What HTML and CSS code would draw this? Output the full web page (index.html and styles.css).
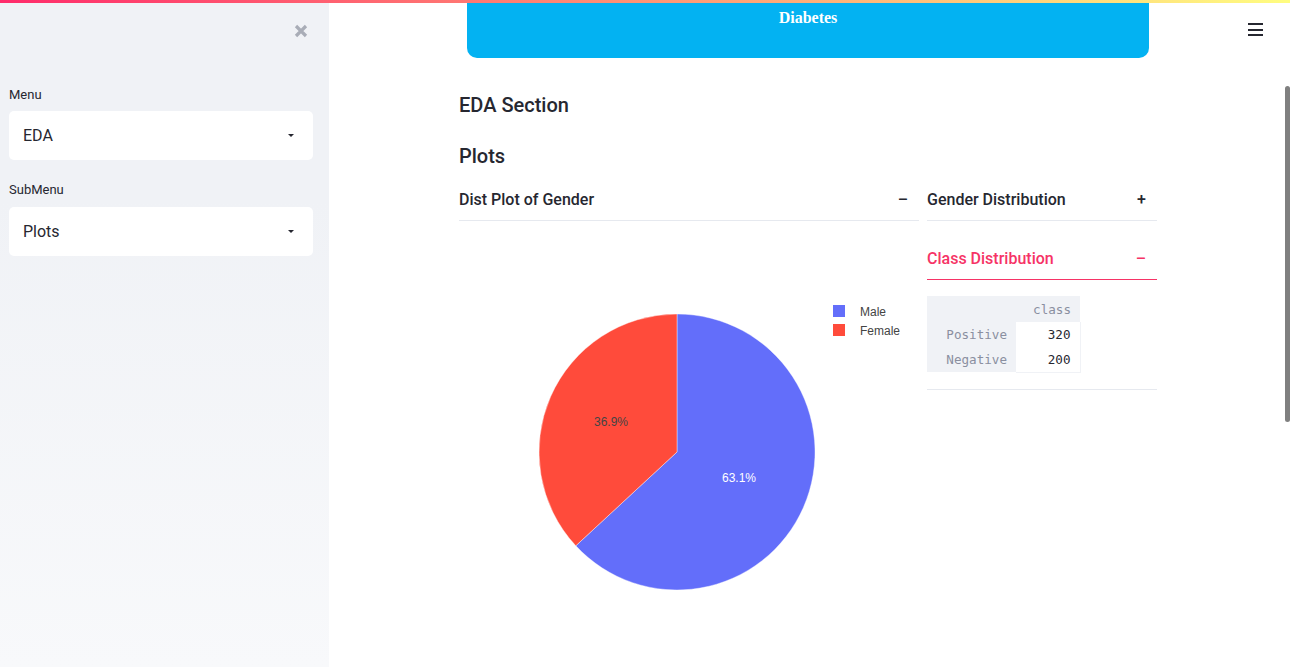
FILE: index.html
```html
<!DOCTYPE html>
<html>
<head>
<meta charset="utf-8">
<link rel="stylesheet" href="styles.css">
</head>
<body>
<div class="decoration"></div>
<aside class="sidebar">
  <div class="close-row">
    <svg class="close" width="14" height="14" viewBox="0 0 14 14"><path d="M2 2L12 12M12 2L2 12" stroke="#a9adb7" stroke-width="3.2" stroke-linecap="butt"/></svg>
  </div>
  <div class="label first">Menu</div>
  <div class="select"><span>EDA</span><span class="caret"></span></div>
  <div class="label">SubMenu</div>
  <div class="select"><span>Plots</span><span class="caret"></span></div>
</aside>
<main class="main">
  <div class="hamburger"><span></span><span></span><span></span></div>
  <div class="block">
    <div class="banner">Diabetes</div>
    <h2 class="heading first-h">EDA Section</h2>
    <h2 class="heading second-h">Plots</h2>
    <div class="columns">
      <div class="col">
        <div class="expander">
          <div class="exp-header"><span>Dist Plot of Gender</span><span class="icon">–</span></div>
          <div class="exp-body plot">
            <svg width="460" height="420" viewBox="0 0 460 420" class="pie">
              <path d="M218,215 L218,77 A138,138 0 1 1 116.8,308.8 Z" fill="#636efa" stroke="#ffffff" stroke-width="0.4"/>
              <path d="M218,215 L116.8,308.8 A138,138 0 0 1 218,77 Z" fill="#ff4b3b" stroke="#ffffff" stroke-width="0.4"/>
              <text x="152" y="189" text-anchor="middle" class="pct dark">36.9%</text>
              <text x="280" y="245" text-anchor="middle" class="pct light">63.1%</text>
              <rect x="374" y="68" width="12" height="12" fill="#636efa"/>
              <rect x="374" y="87" width="12" height="12" fill="#ff4b3b"/>
              <text x="401" y="78.5" class="legend">Male</text>
              <text x="401" y="97.5" class="legend">Female</text>
            </svg>
          </div>
        </div>
      </div>
      <div class="col">
        <div class="expander">
          <div class="exp-header"><span>Gender Distribution</span><span class="icon">+</span></div>
        </div>
        <div class="expander open">
          <div class="exp-header active"><span>Class Distribution</span><span class="icon">–</span></div>
          <div class="exp-body table-body">
            <table class="df">
              <thead><tr><th class="idx"></th><th class="colh">class</th></tr></thead>
              <tbody>
                <tr><th class="idx">Positive</th><td>320</td></tr>
                <tr><th class="idx">Negative</th><td>200</td></tr>
              </tbody>
            </table>
          </div>
        </div>
      </div>
    </div>
  </div>
</main>
<div class="scrollbar"></div>
</body>
</html>
```
FILE: styles.css
```css
* { box-sizing: border-box; }
html, body { margin: 0; padding: 0; }
body {
  width: 1290px;
  height: 667px;
  overflow: hidden;
  display: flex;
  font-family: Roboto, "Noto Sans", sans-serif;
  color: #262730;
  background: #ffffff;
}
.decoration {
  position: fixed;
  top: 0; left: 0; right: 0;
  height: 3px;
  background: linear-gradient(90deg, #ff2b6b, #fffd80);
  z-index: 10;
}
.sidebar {
  width: 329px;
  flex-shrink: 0;
  height: 667px;
  padding: 0 16px 0 9px;
  background: linear-gradient(180deg, #f0f2f6 0%, #f0f2f6 30%, #f8f9fb 100%);
}
.close-row {
  height: 62px;
  display: flex;
  justify-content: flex-end;
  align-items: flex-start;
  padding-top: 24px;
  padding-right: 5px;
}
.label {
  font-size: 13px;
  line-height: 16px;
  margin-top: 22px;
  margin-bottom: 9px;
  color: #262730;
}
.label.first { margin-top: 25px; margin-bottom: 8px; }
.select {
  height: 49px;
  background: #ffffff;
  border-radius: 5px;
  display: flex;
  align-items: center;
  justify-content: space-between;
  padding: 0 19px 0 14px;
  font-size: 16px;
}
.caret {
  width: 0; height: 0;
  border-left: 3.5px solid transparent;
  border-right: 3.5px solid transparent;
  border-top: 3.5px solid #262730;
}
.main {
  flex: 1;
  position: relative;
  padding-right: 3px;
}
.hamburger {
  position: absolute;
  top: 23px;
  left: 919px;
  width: 15px;
  display: flex;
  flex-direction: column;
  gap: 3.5px;
}
.hamburger span {
  display: block;
  height: 2px;
  background: #262730;
}
.block {
  width: 698px;
  margin: 0 auto;
}
.banner {
  margin: 0 8px;
  height: 58px;
  background: #03b2f2;
  border-radius: 0 0 10px 10px;
  color: #ffffff;
  text-align: center;
  font-family: "Liberation Serif", serif;
  font-weight: bold;
  font-size: 16px;
  line-height: 18px;
  padding-top: 9px;
}
.heading {
  margin: 0;
  font-size: 20px;
  font-weight: 500;
  line-height: 28px;
}
.first-h { margin-top: 33px; }
.second-h { margin-top: 23px; }
.columns {
  margin-top: 10px;
  display: grid;
  grid-template-columns: 460px 230px;
  column-gap: 8px;
}
.expander + .expander { margin-top: 18px; }
.exp-header {
  height: 41px;
  border-bottom: 1px solid #e6e9ef;
  display: flex;
  align-items: center;
  justify-content: space-between;
  font-size: 16px;
  font-weight: 500;
  padding-right: 11px;
  padding-bottom: 1px;
}
.exp-header .icon {
  font-size: 16px;
  font-weight: 500;
}
.exp-header.active {
  color: #f63366;
  border-bottom-color: #f63366;
}
.plot { padding-top: 16px; }
.pie { display: block; }
.pct { font-family: "Liberation Sans", Arial, sans-serif; font-size: 12px; }
.pct.dark { fill: #444444; }
.pct.light { fill: #ffffff; }
.legend { font-family: "Liberation Sans", Arial, sans-serif; font-size: 12px; fill: #444444; }
.table-body {
  padding: 16px 0 16px 0;
  border-bottom: 1px solid #e6e9ef;
}
.df {
  border-collapse: collapse;
  font-family: "DejaVu Sans Mono", monospace;
  font-size: 12.6px;
}
.df th, .df td {
  padding: 0 9px 0 9px;
  text-align: right;
  font-weight: normal;
}
.df thead th {
  height: 26px;
  background: #f0f2f6;
  color: #8a8fa0;
}
.df tbody tr { height: 25px; }
.df th.idx {
  background: #f0f2f6;
  color: #8a8fa0;
  width: 89px;
}
.df td {
  width: 64px;
  background: #ffffff;
  color: #262730;
  border-right: 1px solid #f0f2f6;
}
.df tbody tr:last-child td { border-bottom: 1px solid #f0f2f6; }
.scrollbar {
  position: fixed;
  right: 0;
  top: 86px;
  width: 5px;
  height: 336px;
  background: #808080;
  border-radius: 3px;
}
```
